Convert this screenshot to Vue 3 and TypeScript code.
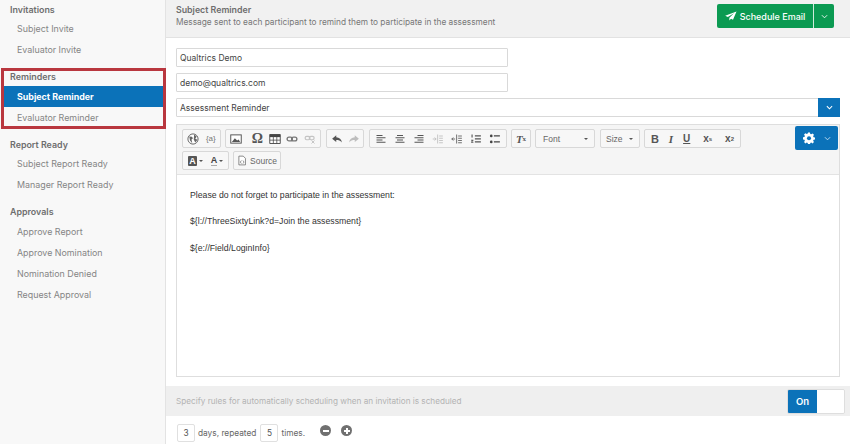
<script setup lang="ts">
interface Group { title: string; items: string[] }
const groups: Group[] = [
  { title: 'Invitations', items: ['Subject Invite', 'Evaluator Invite'] },
  { title: 'Reminders', items: ['Subject Reminder', 'Evaluator Reminder'] },
  { title: 'Report Ready', items: ['Subject Report Ready', 'Manager Report Ready'] },
  { title: 'Approvals', items: ['Approve Report', 'Approve Nomination', 'Nomination Denied', 'Request Approval'] },
]
const active = 'Subject Reminder'
const lines = [
  'Please do not forget to participate in the assessment:',
  '${l://ThreeSixtyLink?d=Join the assessment}',
  '${e://Field/LoginInfo}',
]
const alignIcons = [
  'M2 2.500h8v1.400H2zM2 5.500h12v1.400H2zM2 8.500h8v1.400H2zM2 11.500h12v1.400H2z',
  'M4 2.500h8v1.400H4zM2 5.500h12v1.400H2zM4 8.500h8v1.400H4zM2 11.500h12v1.400H2z',
  'M6 2.500h8v1.400H6zM2 5.500h12v1.400H2zM6 8.500h8v1.400H6zM2 11.500h12v1.400H2z',
]
</script>

<template>
  <div class="app">
    <aside class="side">
      <section v-for="g in groups" :key="g.title" class="group">
        <h3 class="group-title">{{ g.title }}</h3>
        <div v-for="i in g.items" :key="i" class="item" :class="{ on: i === active }">{{ i }}</div>
      </section>
      <div class="callout"></div>
    </aside>

    <main class="main">
      <header class="head">
        <div class="head-text">
          <div class="head-title">Subject Reminder</div>
          <div class="head-sub">Message sent to each participant to remind them to participate in the assessment</div>
        </div>
        <div class="send">
          <span class="send-main">
            <svg class="plane" viewBox="0 0 14 12"><path d="M13.600.6 0 5.600l3.200 1.600 7.400-4.600-5.600 5.600v3.200l2-2.200 2.400 1.200z" fill="#fff"/></svg>
            Schedule Email
          </span>
          <span class="send-caret"><svg class="chev" viewBox="0 0 8 5"><path d="M1 1l3 3 3-3" fill="none" stroke="#fff" stroke-width="1"/></svg></span>
        </div>
      </header>

      <div class="form">
        <div class="field short">Qualtrics Demo</div>
        <div class="field short">demo@qualtrics.com</div>
        <div class="field wide">
          <span class="field-text">Assessment Reminder</span>
          <span class="field-btn"><svg class="chev" viewBox="0 0 8 5"><path d="M1 1l3 3 3-3" fill="none" stroke="#fff" stroke-width="1.200"/></svg></span>
        </div>

        <div class="editor">
          <div class="toolbar">
            <div class="row">
              <div class="tg g1">
                <span class="tb"><svg viewBox="0 0 16 16"><circle cx="8" cy="8" r="6.800" fill="#fff" stroke="#666" stroke-width="1.300"/><path d="M3 4.500l3.500.5 1.500 2-2 1.500 1 5-3-3.500zM9.500 2l3.500 2.500-2 3 3 1.500-3 3.500-2-4z" fill="#666"/></svg></span>
                <span class="tb txt small">{a}</span>
              </div>
              <div class="tg g2">
                <span class="tb"><svg viewBox="0 0 16 16"><rect x="1" y="2.500" width="14" height="11" fill="#fff" stroke="#555" stroke-width="1.300"/><path d="M2.500 12l4-5 3 3 2-1.500 2 3.500z" fill="#555"/></svg></span>
                <span class="tb txt omega">Ω</span>
                <span class="tb"><svg viewBox="0 0 16 16"><path d="M1 2h14v12H1z" fill="#fff" stroke="#444" stroke-width="1.200"/><path d="M1 2h14v3.500H1z" fill="#444"/><path d="M1 9.500h14M5.800 5v9M10.400 5v9" stroke="#444" stroke-width="1"/></svg></span>
                <span class="tb"><svg viewBox="0 0 16 16"><rect x="1.500" y="5.500" width="7" height="5" rx="2.500" fill="none" stroke="#777" stroke-width="1.800"/><rect x="7.500" y="5.500" width="7" height="5" rx="2.500" fill="none" stroke="#777" stroke-width="1.800"/></svg></span>
                <span class="tb dim"><svg viewBox="0 0 16 16"><rect x="1.500" y="4.500" width="6.500" height="4.500" rx="2.200" fill="none" stroke="#888" stroke-width="1.600"/><rect x="7" y="4.500" width="6.500" height="4.500" rx="2.200" fill="none" stroke="#888" stroke-width="1.600"/><path d="M10 10l4 4M14 10l-4 4" stroke="#888" stroke-width="1.300"/></svg></span>
              </div>
              <div class="tg g3">
                <span class="tb"><svg viewBox="0 0 16 16"><path d="M7 3 1.500 7.500 7 12V9.200c3 0 5.500.8 7.500 3.300C14 8.500 11 6 7 5.800z" fill="#555"/></svg></span>
                <span class="tb dim"><svg viewBox="0 0 16 16"><path d="M9 3l5.500 4.500L9 12V9.200c-3 0-5.500.8-7.500 3.300C2 8.500 5 6 9 5.800z" fill="#777"/></svg></span>
              </div>
              <div class="tg g4">
                <span v-for="d in alignIcons" :key="d" class="tb"><svg viewBox="0 0 16 16"><path :d="d" fill="#555"/></svg></span>
                <span class="tb dim"><svg viewBox="0 0 16 16"><path d="M1 8h4.500M3.500 6l2 2-2 2M7.500 2v12M9.500 4h5M9.500 7h5M9.500 10h5M9.500 13h5" fill="none" stroke="#777" stroke-width="1.100"/></svg></span>
                <span class="tb"><svg viewBox="0 0 16 16"><path d="M5.500 8H1M3 6 1 8l2 2M7.500 2v12M9.500 4h5M9.500 7h5M9.500 10h5M9.500 13h5" fill="none" stroke="#555" stroke-width="1.100"/></svg></span>
                <span class="tb"><svg viewBox="0 0 16 16"><path d="M6.500 3h8v1.600h-8zM6.500 7h8v1.600h-8zM6.500 11h8v1.600h-8zM2 2h1.500v4H2zM1.500 9h3v1.200l-2 1.600h2V13h-3v-1.200l1.800-1.600h-1.800z" fill="#555"/></svg></span>
                <span class="tb"><svg viewBox="0 0 16 16"><path d="M6.500 3h8v1.800h-8zM6.500 11h8v1.800h-8z" fill="#444"/><circle cx="3" cy="3.900" r="1.800" fill="#444"/><circle cx="3" cy="11.900" r="1.800" fill="#444"/></svg></span>
              </div>
              <div class="tg g5">
                <span class="tb txt clear">T<sub>x</sub></span>
              </div>
              <div class="tg combo font"><span>Font</span><i class="tri"></i></div>
              <div class="tg combo size"><span>Size</span><i class="tri"></i></div>
              <div class="tg g6">
                <span class="tb txt bold">B</span>
                <span class="tb txt ital">I</span>
                <span class="tb txt under">U</span>
                <span class="tb txt script">x<sub>s</sub></span>
                <span class="tb txt script">x<sup>2</sup></span>
              </div>
              <div class="gear">
                <svg class="cog" viewBox="0 0 16 16"><path d="M6.700.5h2.600l.4 2 1.300.6 1.800-1.100 1.800 1.800-1.100 1.800.6 1.300 2 .4v2.600l-2 .4-.6 1.300 1.100 1.800-1.800 1.800-1.800-1.100-1.300.6-.4 2H6.700l-.4-2-1.300-.6-1.800 1.100-1.800-1.800 1.100-1.800-.6-1.300-2-.4V6.900l2-.4.600-1.300-1.100-1.800 1.800-1.800 1.800 1.100 1.300-.6z" fill="#fff"/><circle cx="8" cy="8.200" r="2.700" fill="#0b72b9"/></svg>
                <svg class="chev" viewBox="0 0 8 5"><path d="M1 1l3 3 3-3" fill="none" stroke="#cfe3f3" stroke-width="1"/></svg>
              </div>
            </div>
            <div class="row">
              <div class="tg g7">
                <span class="tb color"><b class="a-bg">A</b><i class="tri"></i></span>
                <span class="tb color"><b class="a-fg">A</b><i class="tri"></i></span>
              </div>
              <div class="tg g8">
                <span class="source">
                  <svg viewBox="0 0 16 16"><path d="M3 1h7l3.500 3.500V15H3z" fill="#fff" stroke="#666" stroke-width="1.200"/><path d="M7 8 5.300 10.500 7 13M9.500 8l1.700 2.500L9.500 13" fill="none" stroke="#666" stroke-width="1.100"/></svg>
                  Source
                </span>
              </div>
            </div>
          </div>
          <div class="body">
            <p v-for="l in lines" :key="l">{{ l }}</p>
          </div>
        </div>
      </div>

      <div class="rule">
        <span>Specify rules for automatically scheduling when an invitation is scheduled</span>
        <div class="toggle"><span class="toggle-on">On</span><span class="toggle-off"></span></div>
      </div>

      <div class="repeat">
        <span class="num">3</span>
        <span class="word">days, repeated</span>
        <span class="num">5</span>
        <span class="word">times.</span>
        <span class="round minus"></span>
        <span class="round plus"></span>
      </div>
    </main>
  </div>
</template>

<style scoped>
.app {
  width: 850px;
  height: 444px;
  display: flex;
  overflow: hidden;
  background: #fff;
  font-family: Inter, "Liberation Sans", sans-serif;
  color: #6b6b6b;
}
.side {
  position: relative;
  box-sizing: border-box;
  width: 166px;
  flex: none;
  padding-top: 0.5px;
  background: #f8f8f8;
  border-right: 1px solid #e3e3e3;
  font-size: 8.900px;
}
.group { margin-bottom: 8px; }
.group-title {
  margin: 0;
  height: 17.500px;
  line-height: 17.500px;
  padding-left: 10px;
  font-size: 8.900px;
  font-weight: 600;
  color: #6e6e6e;
}
.item {
  height: 21px;
  line-height: 21px;
  padding-left: 17px;
  color: #858585;
}
.item.on {
  margin: 0 1px 0 2px;
  padding-left: 15px;
  background: #0b72b9;
  color: #fff;
  font-weight: 700;
}
.callout {
  position: absolute;
  left: 1px;
  top: 68px;
  width: 165px;
  height: 61px;
  box-sizing: border-box;
  border: 3px solid #b9373f;
}
.main {
  flex: 1;
  min-width: 0;
  display: flex;
  flex-direction: column;
}
.head {
  box-sizing: border-box;
  height: 38px;
  flex: none;
  padding: 4px 16px 0 10px;
  display: flex;
  justify-content: space-between;
  align-items: flex-start;
  background: #f1f1f1;
  border-bottom: 1px solid #e2e2e2;
}
.head-title { font-size: 8.800px; font-weight: 600; line-height: 11px; color: #6e6e6e; }
.head-sub { margin-top: 1px; font-size: 8.300px; line-height: 12px; color: #777; }
.send {
  display: flex;
  height: 24px;
  border-radius: 2px;
  overflow: hidden;
  background: #0b9a52;
  color: #fff;
  font-size: 9px;
  font-weight: 500;
}
.send-main {
  width: 96px;
  display: flex;
  align-items: center;
  justify-content: center;
  gap: 3px;
}
.plane { width: 12px; height: 10px; }
.send-caret {
  width: 20px;
  display: flex;
  align-items: center;
  justify-content: center;
  border-left: 1px solid #cfeadb;
}
.chev { width: 7px; height: 5px; }
.form {
  flex: none;
  padding: 10px 10px 0 10px;
  display: flex;
  flex-direction: column;
  gap: 6px;
}
.field {
  box-sizing: border-box;
  height: 19px;
  display: flex;
  align-items: center;
  background: #fff;
  border: 1px solid #d9d9d9;
  border-radius: 1px;
  padding-left: 3px;
  font: 8.500px Inter, "Liberation Sans", sans-serif;
  color: #444;
}
.field.short { width: 332px; }
.field-text { flex: 1; }
.field-btn {
  width: 22px;
  height: 19px;
  margin-right: -1px;
  display: flex;
  align-items: center;
  justify-content: center;
  background: #0b72b9;
}
.editor {
  box-sizing: border-box;
  height: 253px;
  margin-top: 1px;
  border: 1px solid #dedede;
  display: flex;
  flex-direction: column;
}
.toolbar {
  box-sizing: border-box;
  height: 50px;
  flex: none;
  padding: 4px 1px 0 5px;
  display: flex;
  flex-direction: column;
  gap: 3px;
  background: #f5f5f5;
  border-bottom: 1px solid #e3e3e3;
}
.row {
  display: flex;
  gap: 4px;
  height: 19px;
  flex: none;
  align-items: flex-start;
}
.tg {
  box-sizing: border-box;
  height: 19px;
  display: flex;
  align-items: center;
  justify-content: space-around;
  padding: 0 1px;
  background: #f7f7f7;
  border: 1px solid #d8d8d8;
  border-radius: 2px;
}
.g1 { width: 39px; }
.g2 { width: 96px; }
.g3 { width: 38px; margin-left: 1px; }
.g4 { width: 138px; margin-left: 1px; }
.g5 { width: 20px; }
.g6 { width: 97px; }
.g7 { width: 47px; }
.g8 { width: 48px; }
.tb {
  height: 17px;
  display: flex;
  align-items: center;
  justify-content: center;
  font: 9px "Liberation Sans", sans-serif;
  color: #555;
}
.tb svg { width: 12px; height: 12px; }
.dim { opacity: 0.45; }
.small { font-size: 8px; color: #777; }
.omega { margin-left: 4px; font-size: 14px; font-family: "Liberation Serif", serif; font-weight: 700; color: #555; }
.clear { font-family: "Liberation Serif", serif; font-style: italic; font-weight: 700; font-size: 11px; }
.clear sub { font-size: 7px; font-style: normal; line-height: 0; }
.bold { font-weight: 700; font-size: 11px; }
.ital { font-style: italic; font-family: "Liberation Serif", serif; font-size: 11px; font-weight: 700; }
.under { text-decoration: underline; font-size: 10px; font-weight: 700; }
.script { margin-left: 3px; font-size: 10px; font-weight: 700; }
.script sub, .script sup { font-size: 6px; line-height: 0; }
.combo {
  justify-content: space-between;
  padding: 0 6px 0 7px;
  font: 8.500px "Liberation Sans", sans-serif;
  color: #666;
}
.font { width: 60px; }
.size { width: 40px; margin-left: 1px; padding-left: 5px; }
.tri {
  display: inline-block;
  width: 0;
  height: 0;
  border-left: 2px solid transparent;
  border-right: 2px solid transparent;
  border-top: 2.500px solid #555;
}
.gear {
  margin-left: auto;
  width: 43px;
  height: 24px;
  margin-top: -3px;
  display: flex;
  align-items: center;
  justify-content: center;
  gap: 9px;
  background: #0b72b9;
  border-radius: 2px;
}
.cog { width: 12px; height: 12px; }
.color { gap: 2px; }
.color b { font: 700 9px "Liberation Sans", sans-serif; }
.a-bg { background: #555; color: #fff; padding: 0 1.500px; border-radius: 1px; }
.a-fg { color: #444; border-bottom: 1.500px solid #aaa; line-height: 9px; }
.source {
  display: flex;
  align-items: center;
  gap: 3px;
  font: 8.500px "Liberation Sans", sans-serif;
  color: #666;
}
.source svg { width: 10px; height: 11px; flex: none; }
.body {
  flex: 1;
  padding: 14.500px 13px;
  font: 8.700px "Liberation Sans", sans-serif;
  color: #333;
}
.body p { margin: 0 0 15.500px; line-height: 11px; }
.rule {
  box-sizing: border-box;
  height: 30px;
  flex: none;
  margin-top: 9px;
  padding: 0 5px 0 10px;
  display: flex;
  align-items: center;
  justify-content: space-between;
  background: #efefef;
  font-size: 8.200px;
  color: #b3b3b3;
}
.toggle {
  display: flex;
  width: 58px;
  height: 25px;
  border-radius: 2px;
  overflow: hidden;
  border: 1px solid #dedede;
  box-sizing: border-box;
}
.toggle-on {
  width: 29px;
  display: flex;
  align-items: center;
  justify-content: center;
  background: #0b72b9;
  color: #fff;
  font-size: 9.500px;
  font-weight: 600;
}
.toggle-off { flex: 1; background: #fff; }
.repeat {
  flex: 1;
  display: flex;
  align-items: center;
  padding: 5px 0 0 11px;
  font-size: 8.300px;
  color: #666;
}
.word { margin: 0 4px 0 3px; }
.num {
  box-sizing: border-box;
  width: 18px;
  height: 18px;
  display: flex;
  align-items: center;
  justify-content: center;
  border: 1px solid #e0e0e0;
  border-radius: 2px;
  color: #555;
}
.round {
  position: relative;
  width: 11px;
  height: 11px;
  margin-bottom: 4px;
  border-radius: 50%;
  background: #707070;
}
.minus { margin-left: 11px; }
.plus { margin-left: 10px; }
.round::before, .plus::after {
  content: "";
  position: absolute;
  left: 2.500px;
  top: 4.500px;
  width: 6px;
  height: 2px;
  background: #fff;
}
.plus::after { transform: rotate(90deg); }
</style>
